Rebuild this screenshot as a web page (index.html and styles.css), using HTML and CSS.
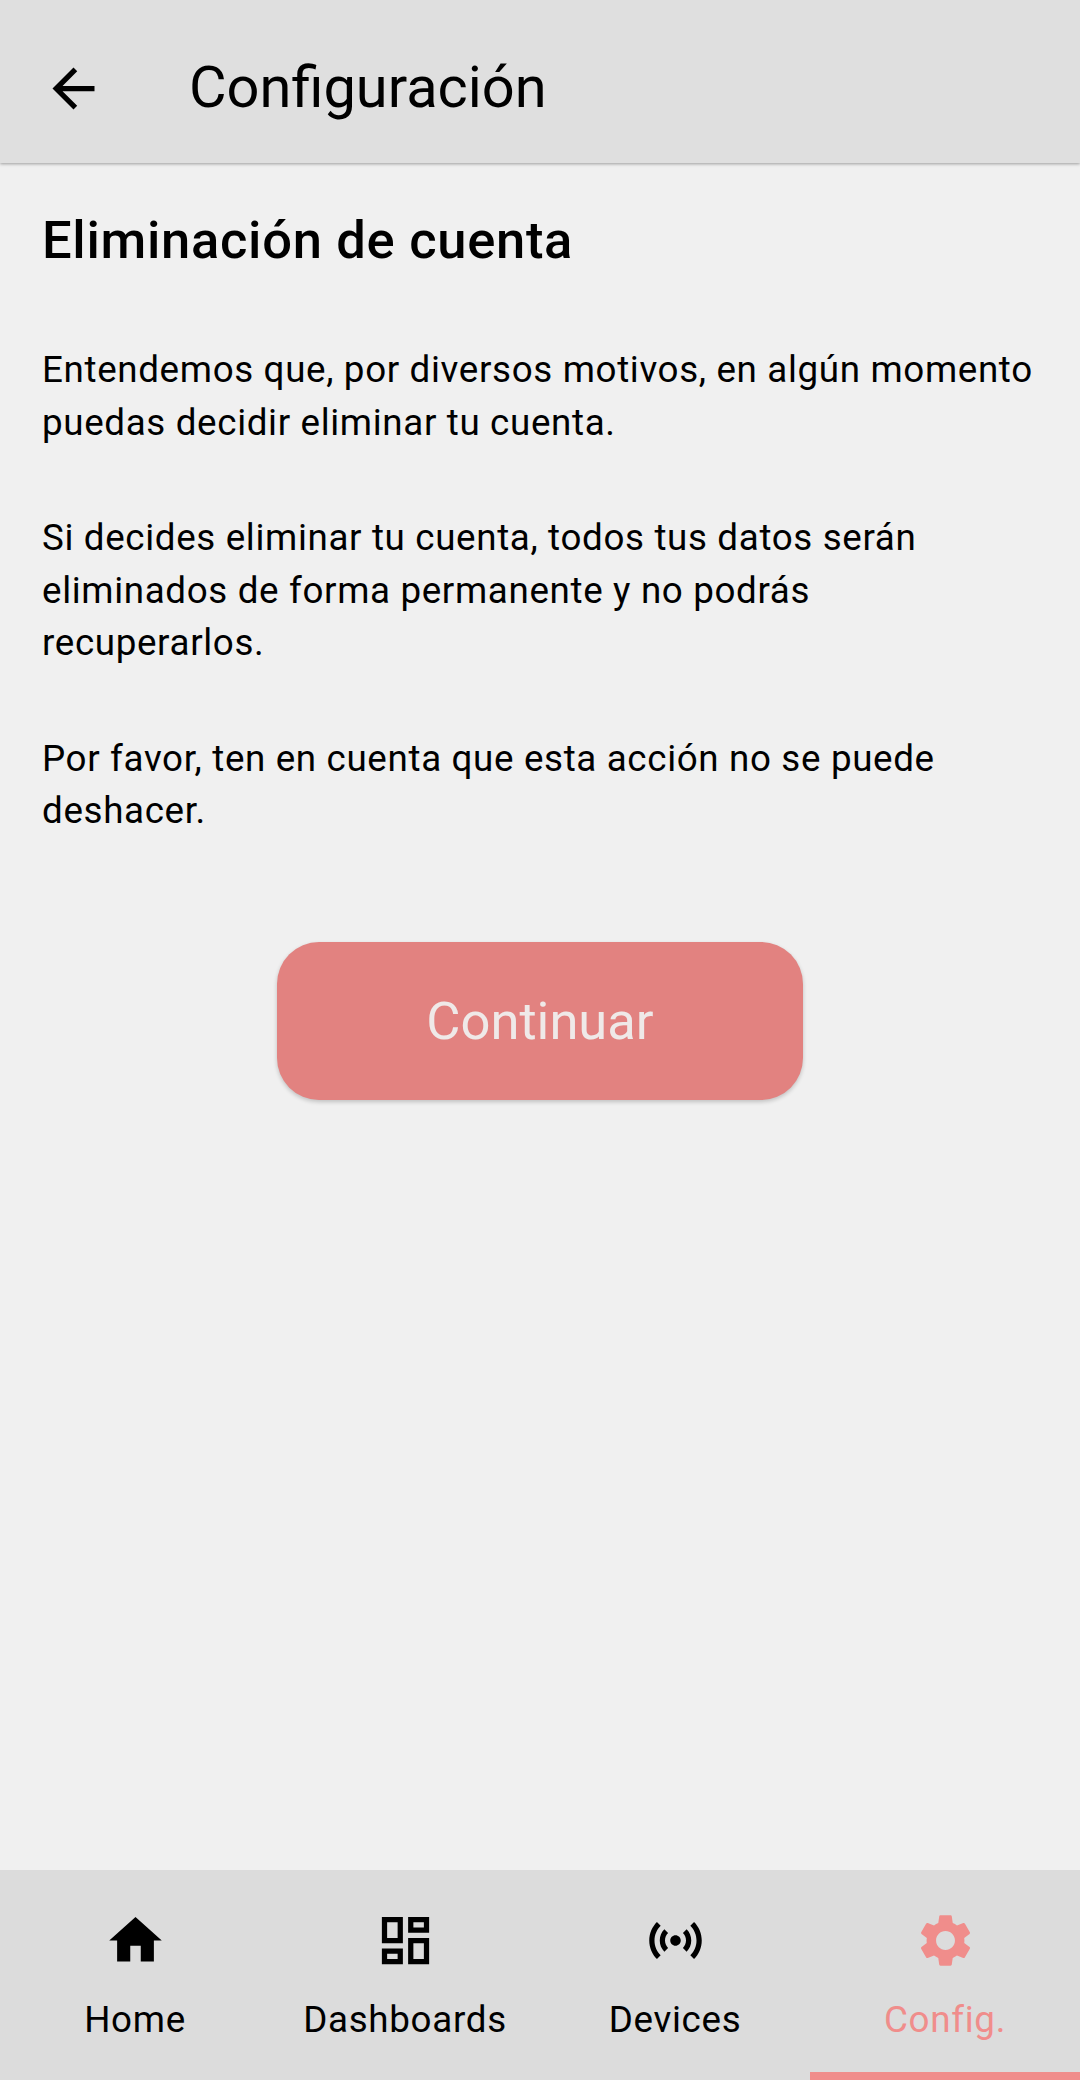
FILE: index.html
```html
<!DOCTYPE html>
<html lang="es">
<head>
<meta charset="utf-8">
<title>Configuración</title>
<link rel="stylesheet" href="styles.css">
</head>
<body>
<div class="app">
  <header class="appbar">
    <svg class="back" viewBox="0 0 24 24" width="63" height="63"><path d="M20 11H7.83l5.59-5.59L12 4l-8 8 8 8 1.41-1.41L7.83 13H20v-2z"/></svg>
    <h1 class="appbar-title">Configuración</h1>
  </header>
  <main class="content">
    <h2 class="heading">Eliminación de cuenta</h2>
    <p class="para">Entendemos que, por diversos motivos, en algún momento puedas decidir eliminar tu cuenta.</p>
    <p class="para">Si decides eliminar tu cuenta, todos tus datos serán eliminados de forma permanente y no podrás recuperarlos.</p>
    <p class="para">Por favor, ten en cuenta que esta acción no se puede deshacer.</p>
    <div class="actions"><button class="cta">Continuar</button></div>
  </main>
  <nav class="tabs">
    <div class="tab">
      <svg class="tab-icon" viewBox="0 0 24 24"><path d="M10 20v-6h4v6h5v-8h3L12 3 2 12h3v8z"/></svg>
      <span class="tab-label">Home</span>
    </div>
    <div class="tab">
      <svg class="tab-icon" viewBox="0 0 24 24"><path d="M19 5v2h-4V5h4M9 5v6H5V5h4m10 8v6h-4v-6h4M9 17v2H5v-2h4M21 3h-8v6h8V3zM11 3H3v10h8V3zm10 8h-8v10h8V11zm-10 4H3v6h8v-6z"/></svg>
      <span class="tab-label">Dashboards</span>
    </div>
    <div class="tab">
      <svg class="tab-icon" viewBox="0 0 24 24"><path d="M7.76 16.24C6.67 15.16 6 13.66 6 12s.67-3.16 1.76-4.24l1.42 1.42C8.45 9.9 8 10.9 8 12c0 1.1.45 2.1 1.17 2.83l-1.41 1.41zm8.48 0C17.33 15.16 18 13.66 18 12s-.67-3.16-1.76-4.24l-1.42 1.42C15.55 9.9 16 10.9 16 12c0 1.1-.45 2.1-1.17 2.83l1.41 1.41zM12 10c-1.1 0-2 .9-2 2s.9 2 2 2 2-.9 2-2-.9-2-2-2zm8 2c0 2.21-.9 4.21-2.35 5.65l1.42 1.42C20.88 17.26 22 14.76 22 12s-1.12-5.26-2.93-7.07l-1.42 1.42C19.1 7.79 20 9.79 20 12zM6.35 6.35L4.93 4.93C3.12 6.74 2 9.24 2 12s1.12 5.26 2.93 7.07l1.42-1.42C4.9 16.21 4 14.21 4 12s.9-4.21 2.35-5.65z"/></svg>
      <span class="tab-label">Devices</span>
    </div>
    <div class="tab tab-active">
      <svg class="tab-icon" viewBox="0 0 24 24"><path d="M19.14 12.94c.04-.3.06-.61.06-.94 0-.32-.02-.64-.07-.94l2.03-1.58c.18-.14.23-.41.12-.61l-1.92-3.32c-.12-.22-.37-.29-.59-.22l-2.39.96c-.5-.38-1.03-.7-1.62-.94l-.36-2.54c-.04-.24-.24-.41-.48-.41h-3.84c-.24 0-.43.17-.47.41l-.36 2.54c-.59.24-1.13.57-1.62.94l-2.39-.96c-.22-.08-.47 0-.59.22L2.74 8.87c-.12.21-.08.47.12.61l2.03 1.58c-.05.3-.09.63-.09.94s.02.64.07.94l-2.03 1.58c-.18.14-.23.41-.12.61l1.92 3.32c.12.22.37.29.59.22l2.39-.96c.5.38 1.03.7 1.62.94l.36 2.54c.05.24.24.41.48.41h3.84c.24 0 .44-.17.47-.41l.36-2.54c.59-.24 1.13-.56 1.62-.94l2.39.96c.22.08.47 0 .59-.22l1.92-3.32c.12-.22.07-.47-.12-.61l-2.01-1.58zM12 15.6c-1.98 0-3.6-1.62-3.6-3.6s1.62-3.6 3.6-3.6 3.6 1.62 3.6 3.6-1.62 3.6-3.6 3.6z"/></svg>
      <span class="tab-label">Config.</span>
    </div>
  </nav>
</div>
</body>
</html>
```
FILE: styles.css
```css
* { box-sizing: border-box; }
html, body { margin: 0; padding: 0; }
body { font-family: Roboto, sans-serif; background: #f0f0f0; color: #000; }
.app { width: 1080px; height: 2080px; display: flex; flex-direction: column; overflow: hidden; }
.appbar {
  height: 163px; flex: none; background: #dfdfdf; display: flex; align-items: center;
  padding: 13px 0 0 42px; box-shadow: 0 1px 3px rgba(0,0,0,.35); position: relative; z-index: 1;
}
.back { fill: #000; flex: none; }
.appbar-title { margin: 0 0 0 84px; font-size: 57.75px; font-weight: 400; line-height: 1.2; }
.content { flex: 1; padding: 0 42px; }
.heading { margin: 44px 0 0; font-size: 52.5px; font-weight: 500; line-height: 66px; letter-spacing: .7px; }
.para { margin: 0; font-size: 36.75px; line-height: 52.5px; letter-spacing: .65px; padding-top: 63px; }
.heading + .para { padding-top: 71px; }
.actions { display: flex; justify-content: center; margin-top: 104px; }
.cta {
  width: 526px; height: 158px; border: 0; border-radius: 42px; background: #e28280;
  color: #efe9e8; font-family: Roboto, sans-serif; font-size: 52.5px; box-shadow: 0 2px 4px rgba(0,0,0,.2);
}
.tabs { height: 210px; flex: none; background: #dcdcdc; display: grid; grid-template-columns: repeat(4, 1fr); }
.tab { display: flex; flex-direction: column; align-items: center; padding-top: 39px; color: #000; position: relative; }
.tab-icon { width: 63px; height: 63px; fill: currentColor; }
.tab-label { margin-top: 22px; font-size: 36.75px; line-height: 52px; letter-spacing: .7px; }
.tab-active { color: #f08d8b; }
.tab-active::after { content: ""; position: absolute; left: 0; right: 0; bottom: 0; height: 8px; background: #f08d8b; }
```
